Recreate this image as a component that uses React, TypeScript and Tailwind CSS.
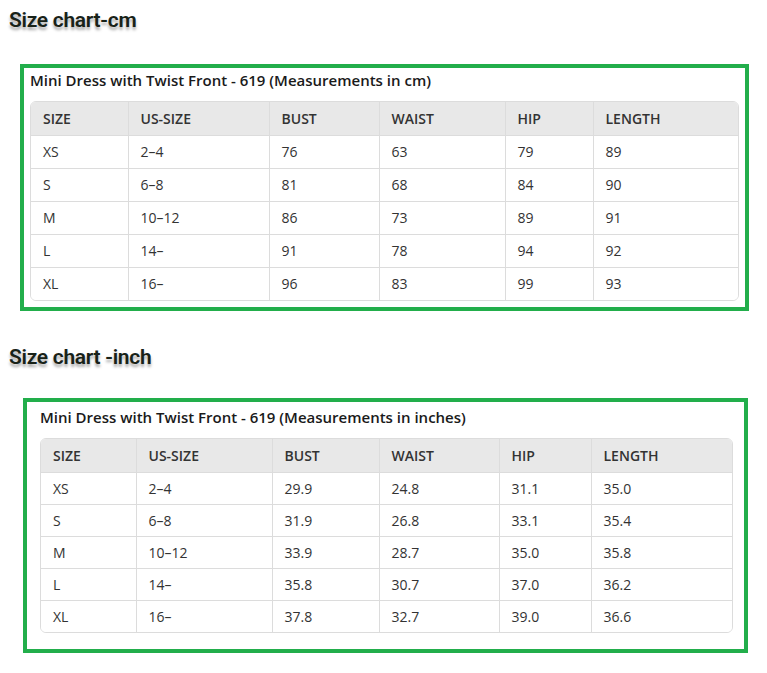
const headers = ['SIZE', 'US-SIZE', 'BUST', 'WAIST', 'HIP', 'LENGTH'];

const cmRows = [
  ['XS', '2–4', '76', '63', '79', '89'],
  ['S', '6–8', '81', '68', '84', '90'],
  ['M', '10–12', '86', '73', '89', '91'],
  ['L', '14–', '91', '78', '94', '92'],
  ['XL', '16–', '96', '83', '99', '93'],
];

const inchRows = [
  ['XS', '2–4', '29.9', '24.8', '31.1', '35.0'],
  ['S', '6–8', '31.9', '26.8', '33.1', '35.4'],
  ['M', '10–12', '33.9', '28.7', '35.0', '35.8'],
  ['L', '14–', '35.8', '30.7', '37.0', '36.2'],
  ['XL', '16–', '37.8', '32.7', '39.0', '36.6'],
];

const SizeTable = ({ rows, widths, rowH }: { rows: string[][]; widths: string[]; rowH: string }) => (
  <div className="rounded-md border border-[#dcdcdc] overflow-hidden">
    <table className="w-full border-collapse table-fixed text-[14px] text-[#333]">
      <colgroup>
        {widths.map((w, i) => (
          <col key={i} className={w} />
        ))}
      </colgroup>
      <thead>
        <tr className="bg-[#e8e8e8] h-[33px]">
          {headers.map((h, i) => (
            <th key={h} className={`text-left font-semibold px-3 border-b border-[#dcdcdc] ${i < 5 ? 'border-r' : ''}`}>
              {h}
            </th>
          ))}
        </tr>
      </thead>
      <tbody>
        {rows.map((r, ri) => (
          <tr key={ri} className={`bg-white ${rowH}`}>
            {r.map((c, ci) => (
              <td
                key={ci}
                className={`px-3 border-[#dcdcdc] ${ci < 5 ? 'border-r' : ''} ${ri < rows.length - 1 ? 'border-b' : ''}`}
              >
                {c}
              </td>
            ))}
          </tr>
        ))}
      </tbody>
    </table>
  </div>
);

const Heading = ({ children }: { children: string }) => (
  <h2 className="font-['Roboto',sans-serif] font-semibold text-[21px] leading-[24px] text-[#182218] pl-[9px] tracking-[-0.3px] [text-shadow:0_3px_3px_rgba(0,0,0,0.35)]">
    {children}
  </h2>
);

export default function App() {
  return (
    <div className="w-[767px] h-[673px] bg-white font-['Open_Sans','Noto_Sans',sans-serif] overflow-hidden">
      <div className="pt-[8px]">
        <Heading>Size chart-cm</Heading>
      </div>
      <div className="ml-[20px] mt-[32px] w-[729px] h-[247px] border-4 border-[#22ae4b] pl-[6px] pr-[6px] pt-[1px]">
        <div className="text-[15px] font-semibold text-[#1a1a1a] h-[32px] leading-[22px]">
          Mini Dress with Twist Front - 619 (Measurements in cm)
        </div>
        <SizeTable
          rows={cmRows}
          rowH="h-[33px]"
          widths={['w-[97px]', 'w-[141px]', 'w-[110px]', 'w-[126px]', 'w-[88px]', 'w-[147px]']}
        />
      </div>
      <div className="mt-[34px]">
        <Heading>Size chart -inch</Heading>
      </div>
      <div className="ml-[23px] mt-[29px] w-[725px] h-[255px] border-4 border-[#22ae4b] pl-[13px] pr-[11px] pt-[4px]">
        <div className="text-[15px] font-semibold text-[#1a1a1a] h-[32px] leading-[22px]">
          Mini Dress with Twist Front - 619 (Measurements in inches)
        </div>
        <SizeTable
          rows={inchRows}
          rowH="h-[32px]"
          widths={['w-[95px]', 'w-[136px]', 'w-[107px]', 'w-[120px]', 'w-[92px]', 'w-[143px]']}
        />
      </div>
    </div>
  );
}
